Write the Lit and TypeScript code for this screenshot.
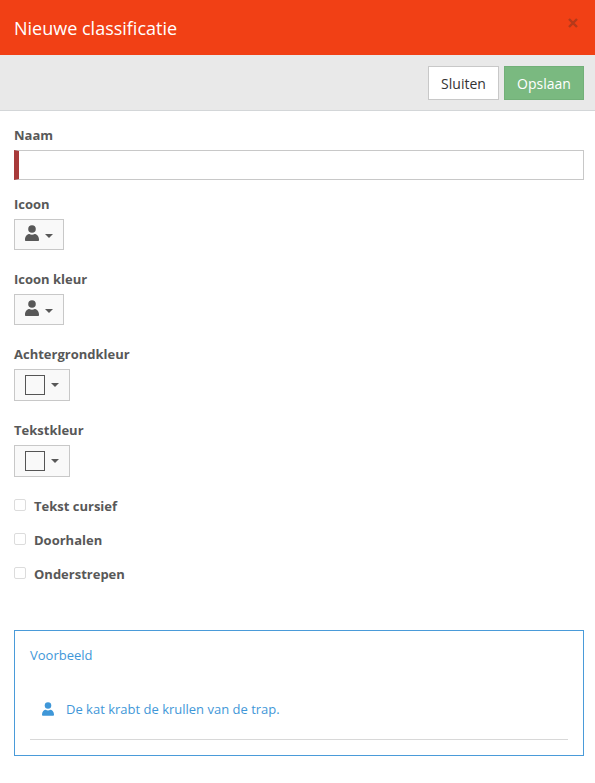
import { LitElement, html, css, svg } from 'lit';
import { customElement } from 'lit/decorators.js';

const person = svg`<circle cx="7" cy="4" r="3.800"/><path d="M0 14.500c0-3.300 2.500-5.500 4.300-5.500c.8.500 1.700.8 2.700.8s1.900-.3 2.700-.8c1.800 0 4.300 2.200 4.300 5.500v.5c0 .6-.4 1-1 1H1c-.6 0-1-.4-1-1z"/>`;

@customElement('app-root')
export class AppRoot extends LitElement {
  static styles = css`
    :host {
      display: block;
      height: 783px;
      overflow: hidden;
      background: #fff;
      color: #585858;
      font-family: 'Open Sans', sans-serif;
      font-size: 13px;
    }
    .header {
      height: 55px;
      background: #f14015;
      display: flex;
      align-items: center;
      justify-content: space-between;
      padding: 0 17px 0 14px;
      color: #fff;
      font-size: 18px;
    }
    .close {
      width: 10px;
      height: 10px;
      margin-top: -10px;
      stroke: #b5391a;
      stroke-width: 2.4;
    }
    .toolbar {
      height: 56px;
      box-sizing: border-box;
      background: #e9e9e9;
      border-bottom: 1px solid #d3d6d8;
      display: flex;
      justify-content: flex-end;
      align-items: flex-start;
      gap: 5px;
      padding: 11px 11px 0 0;
    }
    .btn {
      height: 34px;
      box-sizing: border-box;
      display: flex;
      align-items: center;
      justify-content: center;
      font-size: 14px;
      border: 1px solid #c8c8c8;
      background: #fff;
      color: #333;
    }
    .btn.close-btn {
      width: 71px;
    }
    .btn.save {
      width: 80px;
      background: #7ab980;
      border-color: #72b078;
      color: #fff;
    }
    .form {
      padding: 15px 11px 0 14px;
    }
    label,
    .check {
      font-weight: 700;
      font-size: 13px;
      line-height: 18px;
    }
    label {
      display: block;
    }
    .input {
      height: 30px;
      box-sizing: border-box;
      margin-top: 6px;
      border: 1px solid #c8c8c8;
      border-left: 5px solid #a83a3a;
      margin-bottom: 15px;
    }
    .field {
      margin-bottom: 20px;
    }
    .picker {
      margin-top: 6px;
      box-sizing: border-box;
      display: flex;
      align-items: center;
      border: 1px solid #c8c8c8;
      background: #f9f9f9;
    }
    .picker.icon {
      width: 50px;
      height: 31px;
      padding-left: 10px;
      gap: 6px;
    }
    .picker.swatch {
      width: 56px;
      height: 32px;
      padding-left: 10px;
      gap: 6px;
    }
    .picker svg {
      width: 14px;
      height: 16px;
      margin-top: -3px;
      fill: #585858;
    }
    .picker.icon .caret {
      margin-top: 2px;
    }
    .swatch-box {
      width: 20px;
      height: 20px;
      box-sizing: border-box;
      border: 1px solid #555;
      background: #f9f9f9;
    }
    .caret {
      width: 0;
      height: 0;
      border-left: 4px solid transparent;
      border-right: 4px solid transparent;
      border-top: 4px solid #585858;
    }
    .checks {
      display: flex;
      flex-direction: column;
      gap: 16px;
      margin-top: 20px;
    }
    .check {
      display: flex;
      align-items: center;
      gap: 8px;
    }
    .box {
      width: 12px;
      height: 12px;
      box-sizing: border-box;
      margin-top: -3px;
      border: 1px solid #dcdcdc;
      border-radius: 2px;
      background: #fff;
    }
    .preview {
      margin-top: 47px;
      height: 126px;
      box-sizing: border-box;
      border: 1px solid #4a9bd9;
      padding: 15px 15px 0;
      color: #3f97d8;
    }
    .preview-title {
      line-height: 18px;
    }
    .sample {
      display: flex;
      align-items: center;
      gap: 12px;
      margin-top: 36px;
      padding-left: 12px;
      line-height: 18px;
    }
    .sample svg {
      width: 12px;
      height: 14px;
      fill: #3f97d8;
    }
    .rule {
      margin-top: 21px;
      border-top: 1px solid #d8d8d8;
    }
  `;

  private iconPicker() {
    return html`<div class="picker icon">
      <svg viewBox="0 0 14 16">${person}</svg><span class="caret"></span>
    </div>`;
  }

  private swatchPicker() {
    return html`<div class="picker swatch">
      <span class="swatch-box"></span><span class="caret"></span>
    </div>`;
  }

  render() {
    return html`
      <div class="header">
        <span>Nieuwe classificatie</span>
        <svg class="close" viewBox="0 0 10 10"><path d="M1 1l8 8M9 1l-8 8"/></svg>
      </div>
      <div class="toolbar">
        <div class="btn close-btn">Sluiten</div>
        <div class="btn save">Opslaan</div>
      </div>
      <div class="form">
        <label>Naam</label>
        <div class="input"></div>
        <div class="field"><label>Icoon</label>${this.iconPicker()}</div>
        <div class="field"><label>Icoon kleur</label>${this.iconPicker()}</div>
        <div class="field"><label>Achtergrondkleur</label>${this.swatchPicker()}</div>
        <div class="field"><label>Tekstkleur</label>${this.swatchPicker()}</div>
        <div class="checks">
          <div class="check"><span class="box"></span>Tekst cursief</div>
          <div class="check"><span class="box"></span>Doorhalen</div>
          <div class="check"><span class="box"></span>Onderstrepen</div>
        </div>
        <div class="preview">
          <div class="preview-title">Voorbeeld</div>
          <div class="sample">
            <svg viewBox="0 0 14 16">${person}</svg>
            <span>De kat krabt de krullen van de trap.</span>
          </div>
          <div class="rule"></div>
        </div>
      </div>
    `;
  }
}
